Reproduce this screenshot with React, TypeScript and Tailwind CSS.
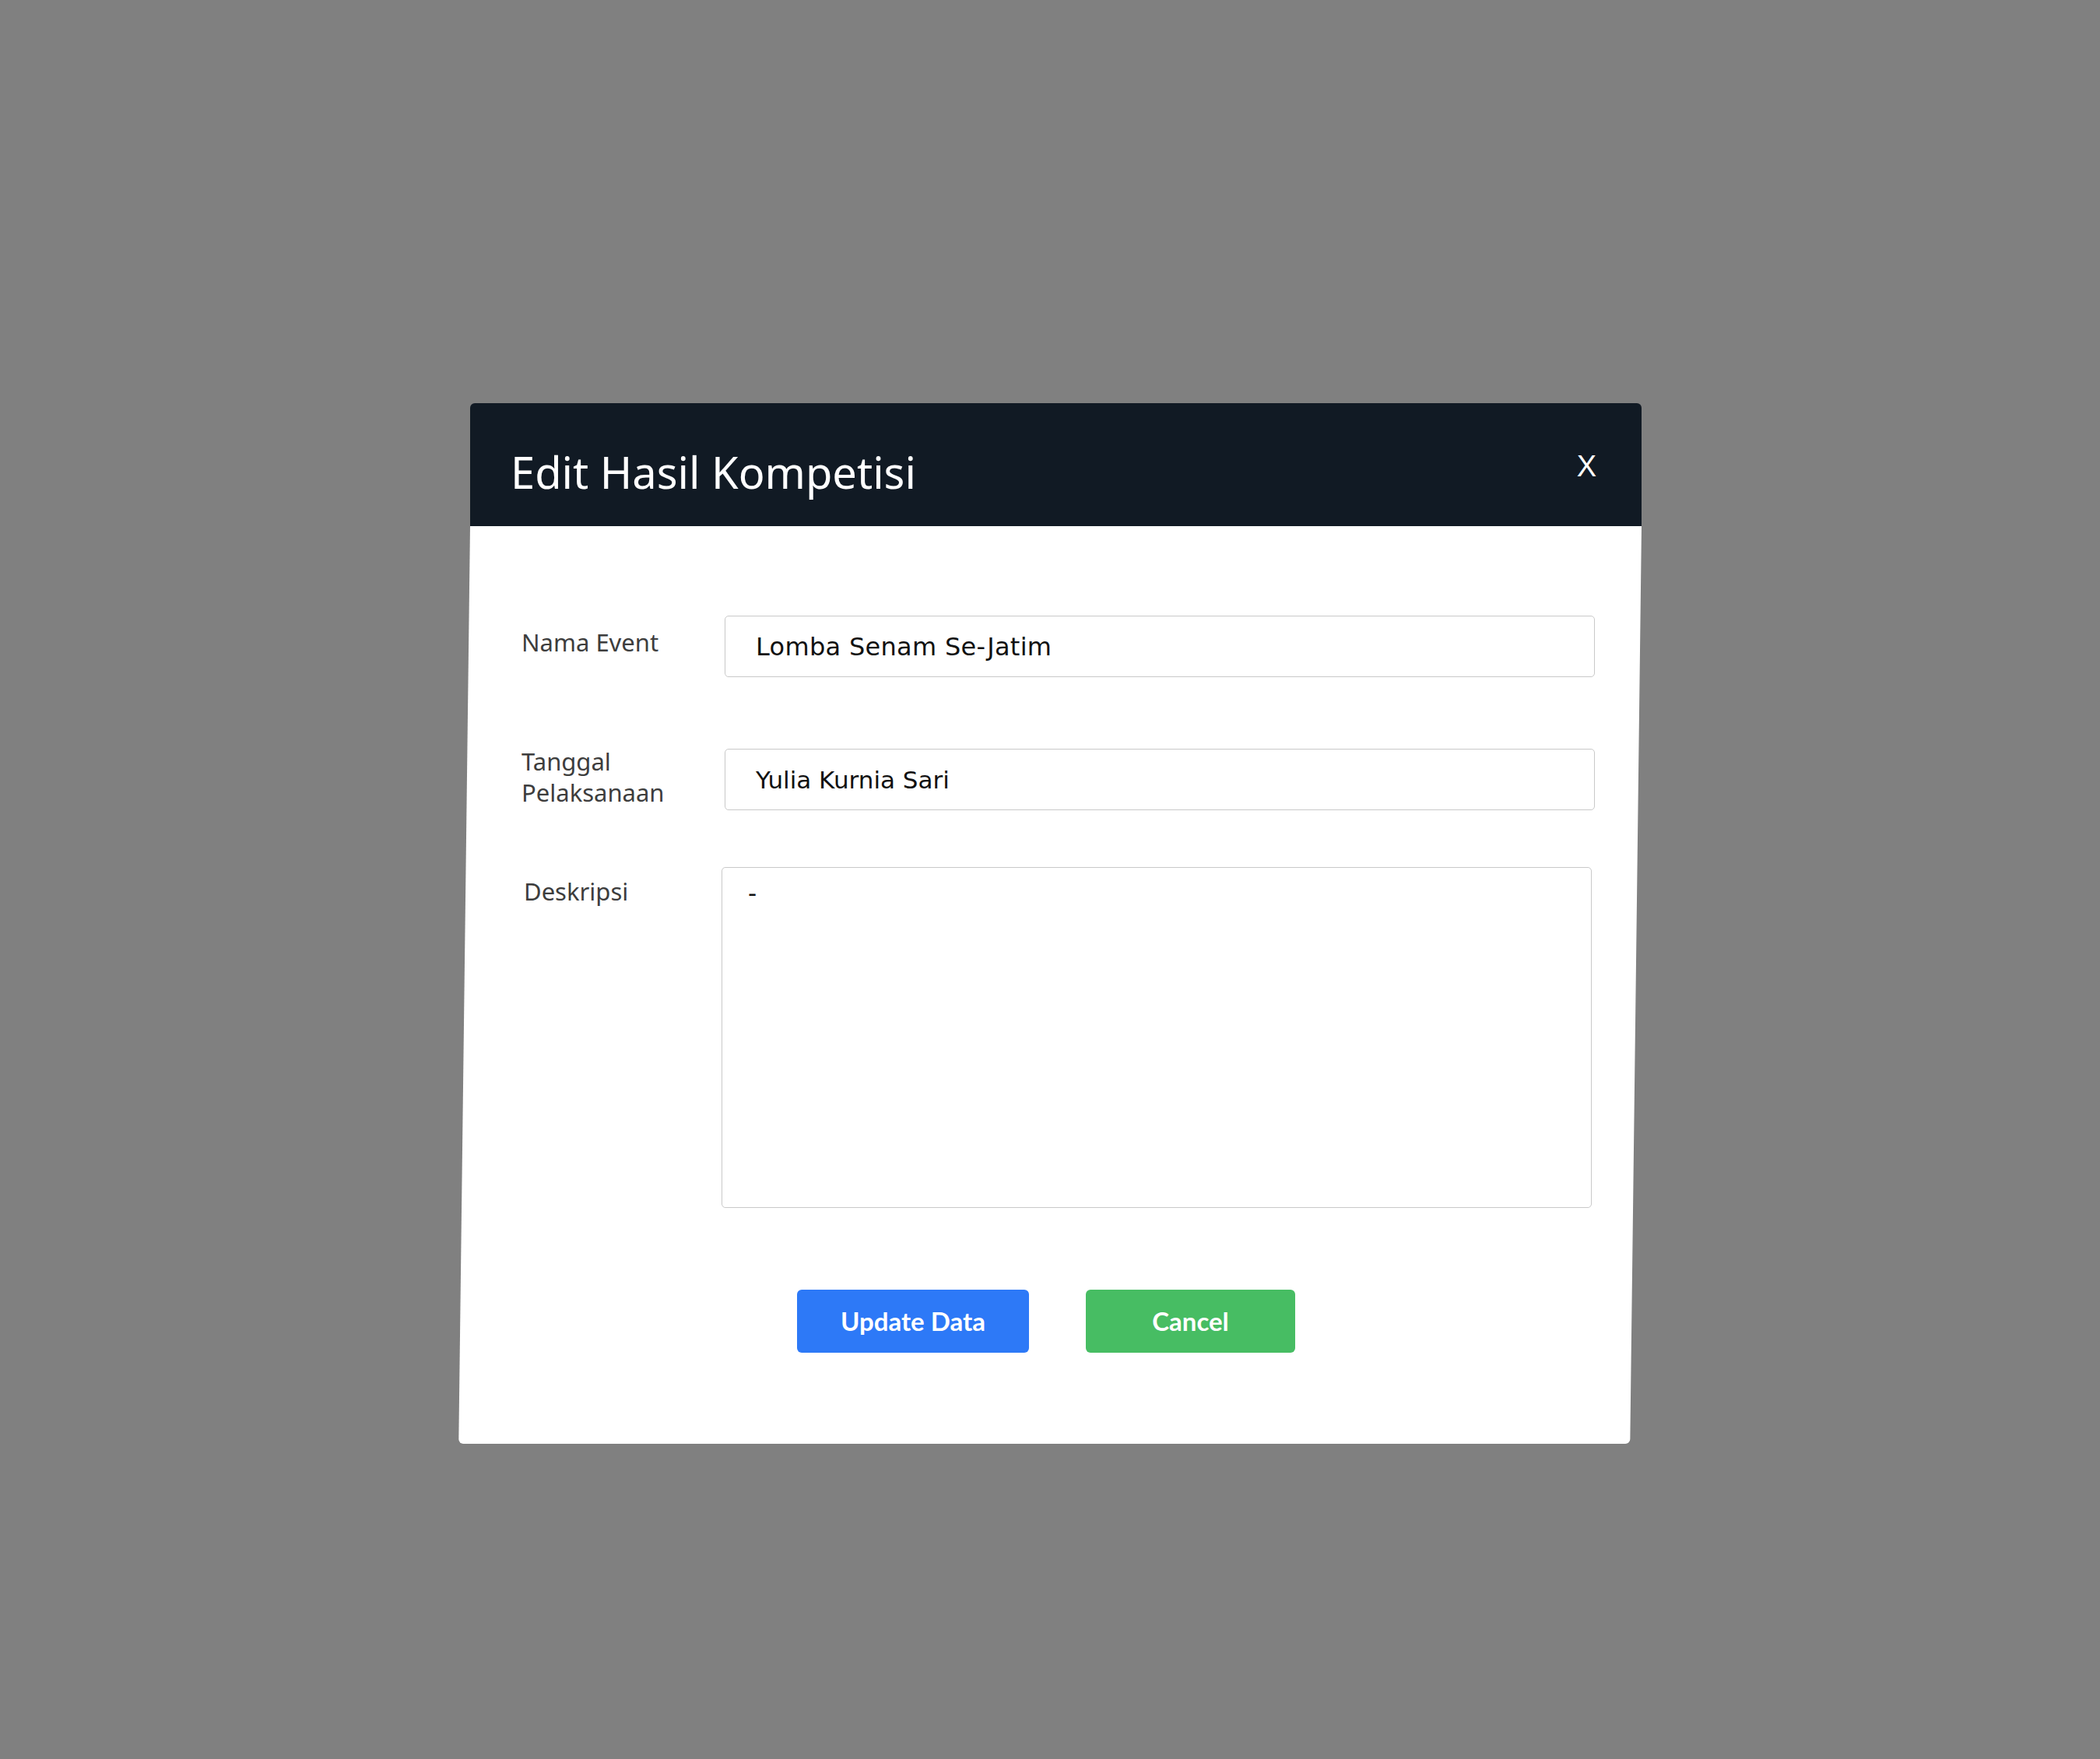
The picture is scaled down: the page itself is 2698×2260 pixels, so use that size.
import React from "react";

export default function App() {
  return (
    <div className="w-[2698px] h-[2260px] bg-[#808080] pt-[518px] pl-[604px]">
      <div className="w-[1505px] flex flex-col">
        <div className="h-[158px] bg-[#111a24] rounded-t-[6px] flex justify-between items-start pl-[52px] pr-[58px]">
          <div className="pt-[60px] text-white text-[56px] leading-none font-['Noto_Sans',sans-serif]">
            Edit Hasil Kompetisi
          </div>
          <div className="pt-[62px] text-white text-[38px] leading-none font-['Liberation_Sans',sans-serif]">
            X
          </div>
        </div>
        <div className="relative h-[1179px]">
          <div className="absolute inset-0 bg-white origin-top skew-x-[-0.716deg] rounded-b-[6px]" />
          <div className="relative flex flex-col pt-[115px] pl-[66px]">
            <div className="flex items-start">
              <div className="w-[261px] mt-[14px] text-[31px] leading-[40px] text-[#3d3d3d] font-['Noto_Sans',sans-serif]">
                Nama Event
              </div>
              <div className="w-[1118px] h-[79px] border border-[#c9c9c9] rounded-[5px] flex items-center pl-[39px] text-[32px] leading-[40px] text-[#111] tracking-[0.3px] font-['DejaVu_Sans',sans-serif]">
                Lomba Senam Se-Jatim
              </div>
            </div>
            <div className="flex items-start mt-[92px]">
              <div className="w-[261px] -mt-[4px] text-[31px] leading-[40px] text-[#3d3d3d] font-['Noto_Sans',sans-serif]">
                Tanggal
                <br />
                Pelaksanaan
              </div>
              <div className="w-[1118px] h-[79px] border border-[#c9c9c9] rounded-[5px] flex items-center pl-[39px] text-[31px] leading-[40px] text-[#111] font-['DejaVu_Sans',sans-serif]">
                Yulia Kurnia Sari
              </div>
            </div>
            <div className="flex items-start mt-[73px]">
              <div className="w-[257px] pl-[3px] mt-[11px] text-[31px] leading-[40px] text-[#3d3d3d] font-['Noto_Sans',sans-serif]">
                Deskripsi
              </div>
              <div className="w-[1118px] h-[438px] border border-[#c9c9c9] rounded-[5px] pl-[33px] pt-[12px] text-[31px] leading-[40px] text-[#111] font-['DejaVu_Sans',sans-serif]">
                -
              </div>
            </div>
            <div className="flex items-start mt-[105px] pl-[354px] gap-[73px]">
              <button className="w-[298px] h-[81px] bg-[#2d79f7] rounded-[6px] text-white text-[33px] leading-none font-bold font-['Lato',sans-serif] flex items-center justify-center">
                Update Data
              </button>
              <button className="w-[269px] h-[81px] bg-[#47bd63] rounded-[6px] text-white text-[33px] leading-none font-bold font-['Lato',sans-serif] flex items-center justify-center">
                Cancel
              </button>
            </div>
          </div>
        </div>
      </div>
    </div>
  );
}
